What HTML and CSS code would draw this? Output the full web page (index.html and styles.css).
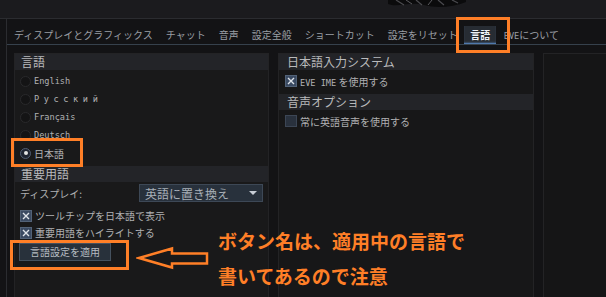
FILE: index.html
```html
<!DOCTYPE html>
<html lang="ja">
<head>
<meta charset="utf-8">
<title>言語設定</title>
<link rel="stylesheet" href="styles.css">
</head>
<body>
<div class="topbar">
  <svg class="art" width="90" height="9" viewBox="0 0 90 9">
    <path d="M6 0 H84 V2 C70 8 52 8 42 5 C28 1 16 8 6 4 Z" fill="#0b0b0c"/>
    <path d="M14 0 L22 5 M34 0 L40 5 M56 0 L62 5 M70 0 L76 3" stroke="#4a4a4e" stroke-width="1.2" fill="none"/>
    <path d="M24 0 L30 4 M50 0 L46 5" stroke="#707074" stroke-width="0.8" fill="none"/>
  </svg>
</div>
<div class="window">
  <nav class="tabs">
    <span class="tab">ディスプレイとグラフィックス</span>
    <span class="tab">チャット</span>
    <span class="tab">音声</span>
    <span class="tab">設定全般</span>
    <span class="tab">ショートカット</span>
    <span class="tab">設定をリセット</span>
    <span class="tab active">言語</span>
    <span class="tab"><span class="lat">EVE</span>について</span>
  </nav>
  <div class="panels">
    <section class="panel left">
      <h2 class="head">言語</h2>
      <div class="radios">
        <div class="row"><span class="radio"></span><span class="lat">English</span></div>
        <div class="row"><span class="radio"></span><span class="lat wide">Русский</span></div>
        <div class="row"><span class="radio"></span><span class="lat">Français</span></div>
        <div class="row"><span class="radio"></span><span class="lat">Deutsch</span></div>
        <div class="row"><span class="radio on"></span><span>日本語</span></div>
      </div>
      <h2 class="head second">重要用語</h2>
      <div class="row select-row">
        <span class="label">ディスプレイ:</span>
        <span class="select"><span>英語に置き換え</span><span class="caret"></span></span>
      </div>
      <div class="row crow first"><span class="check on"><svg width="8" height="8" viewBox="0 0 8 8"><path d="M1 1 L7 7 M7 1 L1 7" stroke="#dfe4ea" stroke-width="1.4"/></svg></span><span>ツールチップを日本語で表示</span></div>
      <div class="row crow"><span class="check on"><svg width="8" height="8" viewBox="0 0 8 8"><path d="M1 1 L7 7 M7 1 L1 7" stroke="#dfe4ea" stroke-width="1.4"/></svg></span><span>重要用語をハイライトする</span></div>
      <div class="btn-row"><span class="button">言語設定を適用</span></div>
    </section>
    <section class="panel right">
      <h2 class="head">日本語入力システム</h2>
      <div class="row"><span class="check on"><svg width="8" height="8" viewBox="0 0 8 8"><path d="M1 1 L7 7 M7 1 L1 7" stroke="#dfe4ea" stroke-width="1.4"/></svg></span><span><span class="lat">EVE IME</span> を使用する</span></div>
      <h2 class="head second">音声オプション</h2>
      <div class="row"><span class="check"></span><span>常に英語音声を使用する</span></div>
    </section>
    <section class="panel third"></section>
  </div>
</div>

<div class="mark mark-tab"></div>
<div class="mark mark-jp"></div>
<div class="mark mark-btn"></div>
<svg class="arrow" width="76" height="24" viewBox="0 0 76 24">
  <path d="M3 12 L36 2.5 L36 7.5 L71 7.5 L71 17.5 L36 17.5 L36 21.5 Z" fill="none" stroke="#ff7f27" stroke-width="2.5" stroke-linejoin="miter"/>
</svg>
<div class="note">
  <p>ボタン名は、適用中の言語で</p>
  <p>書いてあるので注意</p>
</div>
</body>
</html>
```
FILE: styles.css
```css
* { box-sizing: border-box; }
html, body { margin: 0; padding: 0; }
body {
  width: 606px;
  height: 297px;
  overflow: hidden;
  position: relative;
  background: #131315;
  font-family: "Noto Sans CJK JP", "Noto Sans", sans-serif;
  font-size: 10px;
  color: #aeb0b2;
}
.topbar {
  height: 19px;
  background: #1b1b1e;
  border-bottom: 1px solid #2b2c30;
  position: relative;
}
.art { position: absolute; left: 382px; top: 0; }
.window {
  margin-left: 6px;
  border-left: 1px solid #2b2c30;
  height: 278px;
}
.tabs {
  display: flex;
  align-items: flex-end;
  height: 26px;
  padding-left: 0.5px;
  border-bottom: 1px solid #36414c;
}
.tab {
  padding: 0 6.5px;
  height: 18px;
  line-height: 18px;
  color: #9a9ea4;
  white-space: nowrap;
}
.tab.active {
  color: #eef2f6;
  background: #272c33;
  font-weight: bold;
  padding: 0 6px;
  margin-right: 1px;
  box-shadow: inset 0 -2px 2px -1px #5f95d8;
}
.lat {
  font-family: "DejaVu Sans Mono", monospace;
  font-size: 8.6px;
}
.lat.wide { letter-spacing: 4.6px; }
.panels {
  display: flex;
  gap: 9px;
  padding: 8px 0 0 7px;
  height: 252px;
}
.panel {
  background: #19191a;
  border: 1px solid #232325;
  border-bottom: none;
  height: 100%;
}
.left { width: 255px; }
.right { width: 256px; background: #171718; }
.third { flex: 1; background: #151516; border-right: none; }
.head {
  margin: 0;
  height: 16px;
  line-height: 16px;
  background: #232428;
  font-size: 12px;
  font-weight: normal;
  color: #b9babc;
  padding-left: 6px;
}
.right .head { padding-left: 8px; }
.head.second { margin-top: 4px; }
.radios { padding-top: 2px; }
.row {
  display: flex;
  align-items: center;
  height: 18px;
  padding-left: 5px;
  gap: 3px;
  color: #b0b1b3;
  white-space: nowrap;
}
.right .row { padding-left: 6px; margin-top: 2px; }
.radio {
  width: 11px;
  height: 11px;
  border-radius: 50%;
  background: #141415;
  border: 1px solid #29292b;
  display: flex;
  align-items: center;
  justify-content: center;
}
.radio.on {
  background: #1e2431;
  border-color: #4f5c72;
}
.radio.on::after {
  content: "";
  width: 4px;
  height: 4px;
  border-radius: 50%;
  background: #e4e4e4;
}
.select-row {
  margin-top: 2px;
  padding-left: 5px;
  gap: 0;
}
.label { width: 119px; }
.select {
  width: 124px;
  height: 18px;
  background: #28313c;
  border: 1px solid #3d4856;
  display: flex;
  align-items: center;
  justify-content: space-between;
  padding: 0 5px 0 5px;
  font-size: 12px;
  color: #a9b0b8;
}
.caret {
  width: 0; height: 0;
  border-left: 4px solid transparent;
  border-right: 4px solid transparent;
  border-top: 4px solid #c8ced6;
}
.crow { height: 17px; }
.crow.first { margin-top: 5px; }
.check {
  width: 12px;
  height: 12px;
  background: #29313d;
  border: 1px solid #3c4655;
  display: flex;
  align-items: center;
  justify-content: center;
}
.check.on {
  background: #3a4a62;
  border-color: #526277;
}
.btn-row { padding: 2px 0 0 4px; }
.button {
  display: inline-block;
  height: 18px;
  line-height: 16px;
  padding: 0 10px;
  background: #28313b;
  border: 1px solid #45515e;
  color: #b6bcc2;
}
.mark {
  position: absolute;
  border: 3px solid #ff7f27;
}
.mark-tab { left: 456px; top: 17px; width: 54px; height: 36px; }
.mark-jp { left: 11px; top: 138px; width: 72px; height: 29px; }
.mark-btn { left: 10px; top: 240px; width: 119px; height: 30px; }
.arrow { position: absolute; left: 136px; top: 246px; }
.note {
  position: absolute;
  left: 218px;
  top: 223px;
  color: #ff7f27;
  font-weight: bold;
  font-size: 19px;
  line-height: 35px;
  white-space: nowrap;
}
.note p { margin: 0; }
```
